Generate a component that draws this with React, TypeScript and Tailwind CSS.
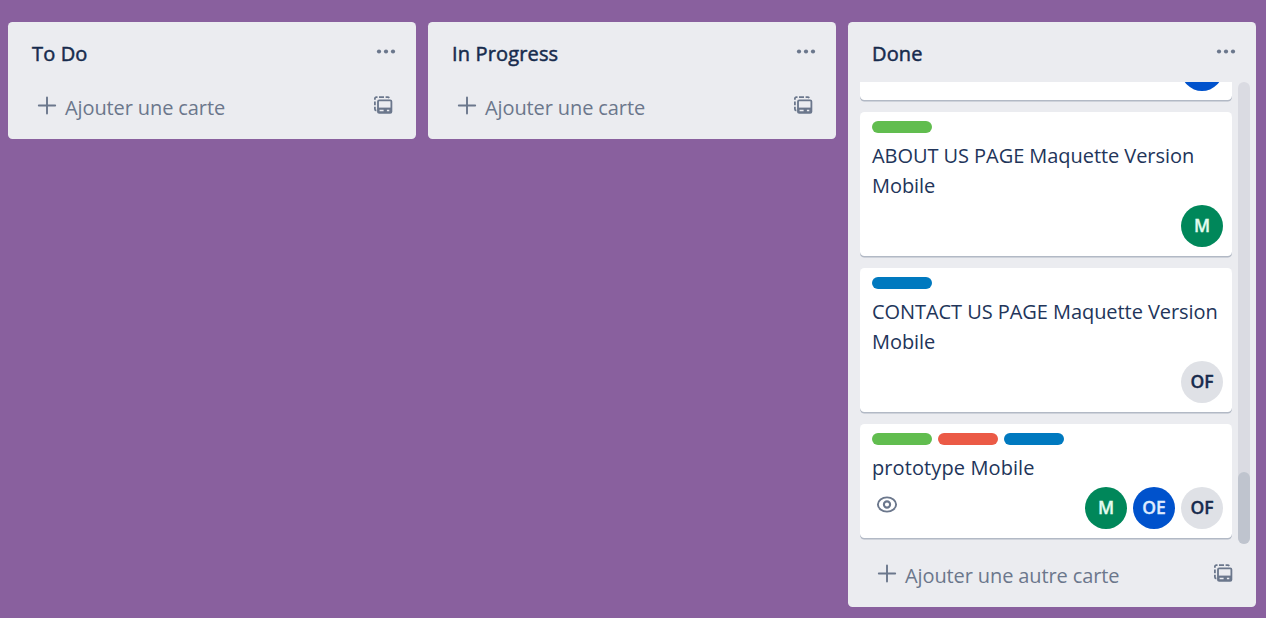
import type { ReactNode } from "react";

const LABELS = {
  green: "bg-[#61bd4f]",
  red: "bg-[#eb5a46]",
  blue: "bg-[#0079bf]",
};

const MEMBERS = {
  M: "bg-[#00875a] text-[#e3fcef]",
  OE: "bg-[#0052cc] text-[#deebff]",
  OF: "bg-[#dfe1e6] text-[#172b4d]",
};

type LabelColor = keyof typeof LABELS;
type Member = keyof typeof MEMBERS;

function PlusIcon() {
  return (
    <svg className="h-5 w-5 shrink-0" viewBox="0 0 20 20" fill="none" stroke="currentColor" strokeWidth="1.9" strokeLinecap="round">
      <path d="M10 1.5v16M1.8 9.5h16.4" />
    </svg>
  );
}

function DotsIcon() {
  return (
    <svg className="h-5 w-5" viewBox="0 0 20 20" fill="currentColor">
      <circle cx="3" cy="10.5" r="2.1" />
      <circle cx="10" cy="10.5" r="2.1" />
      <circle cx="17" cy="10.5" r="2.1" />
    </svg>
  );
}

function TemplateIcon() {
  return (
    <svg className="h-5 w-5 shrink-0" viewBox="0 0 20 20" fill="none" stroke="currentColor">
      <g strokeWidth="1.8">
        <path d="M1.9 4.8V3.6a1.4 1.4 0 0 1 1.4-1.4h1.2M6 2.2h5M12.6 2.2h2.2q.9 0 1.4.7" />
        <path d="M1.9 6.4v3.8M1.9 11.8v2.2q0 1.5 1.5 1.7" />
      </g>
      <rect x="5" y="5.3" width="13.4" height="12.6" rx="1.2" strokeWidth="1.8" />
      <path d="M4.8 12.6h14v5.4h-14z" fill="currentColor" stroke="none" />
      <path d="M6.6 15.5h4M13.9 15.5h2.4" stroke="#ebecf0" strokeWidth="1.3" />
    </svg>
  );
}

function EyeIcon() {
  return (
    <svg className="h-5 w-[22px]" viewBox="0 0 22 20" fill="none" stroke="currentColor" strokeWidth="1.9">
      <path d="M1.9 10.5C1.9 6.7 6 3.4 11 3.4s9.1 3.3 9.1 7.1-4.1 7.1-9.1 7.1-9.1-3.3-9.1-7.1z" />
      <circle cx="11" cy="10.5" r="3.1" strokeWidth="2.1" />
    </svg>
  );
}

function Card({ labels = [], title, members, watched, tracking = "tracking-[-0.06px]" }: {
  labels?: LabelColor[];
  title: string;
  members: Member[];
  watched?: boolean;
  tracking?: string;
}) {
  return (
    <article className="shrink-0 rounded-[4.5px] bg-white pt-[9px] pr-[9px] pb-[9px] pl-3 shadow-[0_1.5px_0_#091e4240]">
      <div className="flex gap-1.5">
        {labels.map((color) => (
          <span key={color} className={`h-3 w-[60px] rounded-full ${LABELS[color]}`} />
        ))}
      </div>
      <p className={`mt-2 -mr-2 text-[20px] leading-[30px] text-[#22355a] ${tracking}`}>{title}</p>
      <div className="mt-1 flex items-start justify-between">
        <div className="pt-[7px] pl-1 text-[#6b778c]">{watched && <EyeIcon />}</div>
        <div className="flex gap-1.5">
          {members.map((name) => (
            <span key={name} className={`flex h-[42px] w-[42px] items-center justify-center rounded-full text-[17.5px] leading-none font-semibold [-webkit-text-stroke:0.35px] ${MEMBERS[name]}`}>
              {name}
            </span>
          ))}
        </div>
      </div>
    </article>
  );
}

/* Bottom edge of the card that is scrolled out of the list. */
function ScrolledCard() {
  return (
    <div className="flex h-[18px] shrink-0 flex-col items-end justify-end overflow-hidden rounded-b-[4.5px] bg-white pr-[9px] pb-[9px] shadow-[0_1.5px_0_#091e4240]">
      <span className="h-[42px] w-[42px] shrink-0 rounded-full bg-[#0052cc]" />
    </div>
  );
}

function List({ title, addLabel, children }: { title: string; addLabel: string; children?: ReactNode }) {
  return (
    <section className="flex w-[408px] shrink-0 flex-col rounded-[4.5px] bg-[#ebecf0]">
      <header className="flex h-[60px] items-start justify-between pt-[17px] pr-5 pl-6">
        <h2 className="text-[20px] leading-[30px] tracking-[0.15px] text-[#172b4d] [-webkit-text-stroke:0.5px]">{title}</h2>
        <button className="mt-[2px] text-[#6b778c]"><DotsIcon /></button>
      </header>
      {children}
      <footer className="flex h-[57px] items-start justify-between pt-[11px] pr-[23px] pl-[29px] text-[#6b778c]">
        <button className="flex text-[20px] leading-[30px] tracking-[-0.11px]">
          <span className="mt-[3px] mr-2"><PlusIcon /></span>
          {addLabel}
        </button>
        <button className="mt-[2px]"><TemplateIcon /></button>
      </footer>
    </section>
  );
}

export default function App() {
  return (
    <main className="flex h-[618px] items-start gap-3 overflow-hidden bg-[#89609e] pt-[22px] pl-2 font-['Open_Sans','Noto_Sans',sans-serif]">
      <List title="To Do" addLabel="Ajouter une carte" />
      <List title="In Progress" addLabel="Ajouter une carte" />
      <List title="Done" addLabel="Ajouter une autre carte">
        <div className="mb-[6px] flex h-[462px] justify-between pr-1.5 pl-3">
          <div className="flex w-[372px] flex-col justify-end gap-3 overflow-hidden pb-1.5">
            <ScrolledCard />
            <Card labels={["green"]} title="ABOUT US PAGE Maquette Version Mobile" members={["M"]} />
            <Card labels={["blue"]} title="CONTACT US PAGE Maquette Version Mobile" members={["OF"]} />
            <Card labels={["green", "red", "blue"]} title="prototype Mobile" members={["M", "OE", "OF"]} watched tracking="tracking-[0.1px]" />
          </div>
          <div className="flex w-3 flex-col justify-end rounded-full bg-[#dadbe2]">
            <div className="h-[72px] rounded-full bg-[#bfc4ce]" />
          </div>
        </div>
      </List>
    </main>
  );
}
